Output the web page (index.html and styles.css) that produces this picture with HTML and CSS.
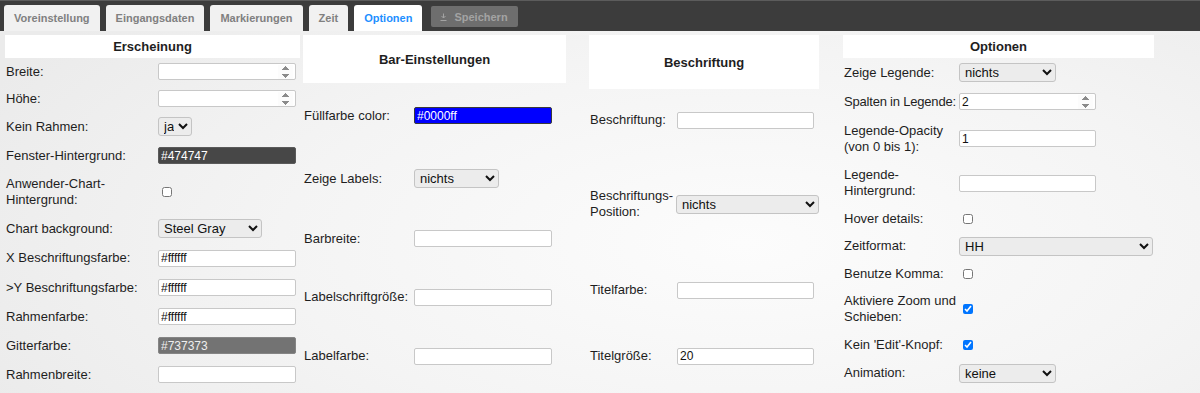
FILE: index.html
```html
<!DOCTYPE html>
<html lang="de">
<head>
  <meta charset="UTF-8" />
  <meta name="viewport" content="width=device-width, initial-scale=1.0" />
  <title>Chart Optionen</title>
  <link rel="stylesheet" href="styles.css">
</head>
<body>
  <div class="topbar">
    <div class="tab">Voreinstellung</div>
    <div class="tab">Eingangsdaten</div>
    <div class="tab">Markierungen</div>
    <div class="tab">Zeit</div>
    <div class="tab active">Optionen</div>
    <button class="save" disabled>
      <svg width="7" height="8" viewBox="0 0 7 8"><path d="M3.5 0.5v4.5M1.5 3l2 2 2-2M0.5 7.5h6" fill="none" stroke="#a3a3a3" stroke-width="1"/></svg>
      Speichern
    </button>
  </div>

  <div class="content">
    <!-- Erscheinung -->
    <div class="col col-look">
      <div class="col-head">Erscheinung</div>
      <div class="row"><label>Breite:</label><input type="number" class="field"></div>
      <div class="row"><label>Höhe:</label><input type="number" class="field"></div>
      <div class="row"><label>Kein Rahmen:</label><select class="pick w-ja"><option>ja</option><option>nein</option></select></div>
      <div class="row"><label>Fenster-Hintergrund:</label><input type="text" class="field dark" value="#474747"></div>
      <div class="row"><label>Anwender-Chart-Hintergrund:</label><input type="checkbox" class="check"></div>
      <div class="row"><label>Chart background:</label><select class="pick w-gray"><option>Steel Gray</option></select></div>
      <div class="row"><label>X Beschriftungsfarbe:</label><input type="text" class="field" value="#ffffff"></div>
      <div class="row"><label>&gt;Y Beschriftungsfarbe:</label><input type="text" class="field" value="#ffffff"></div>
      <div class="row"><label>Rahmenfarbe:</label><input type="text" class="field" value="#ffffff"></div>
      <div class="row"><label>Gitterfarbe:</label><input type="text" class="field grid" value="#737373"></div>
      <div class="row"><label>Rahmenbreite:</label><input type="text" class="field"></div>
    </div>

    <!-- Bar-Einstellungen -->
    <div class="col col-bar">
      <div class="col-head">Bar-Einstellungen</div>
      <div class="row"><label>Füllfarbe color:</label><input type="text" class="field blue" value="#0000ff"></div>
      <div class="row"><label>Zeige Labels:</label><select class="pick w-nichts"><option>nichts</option></select></div>
      <div class="row"><label>Barbreite:</label><input type="text" class="field"></div>
      <div class="row"><label>Labelschriftgröße:</label><input type="text" class="field"></div>
      <div class="row"><label>Labelfarbe:</label><input type="text" class="field"></div>
    </div>

    <!-- Beschriftung -->
    <div class="col col-text">
      <div class="col-head">Beschriftung</div>
      <div class="row"><label>Beschriftung:</label><input type="text" class="field"></div>
      <div class="row"><label>Beschriftungs-Position:</label><select class="pick w-pos"><option>nichts</option></select></div>
      <div class="row"><label>Titelfarbe:</label><input type="text" class="field"></div>
      <div class="row"><label>Titelgröße:</label><input type="text" class="field" value="20"></div>
    </div>

    <!-- Optionen -->
    <div class="col col-opt">
      <div class="col-head">Optionen</div>
      <div class="row"><label>Zeige Legende:</label><select class="pick w-mid"><option>nichts</option></select></div>
      <div class="row"><label class="one-line">Spalten in Legende:</label><input type="number" class="field" value="2"></div>
      <div class="row"><label>Legende-Opacity (von 0 bis 1):</label><input type="text" class="field" value="1"></div>
      <div class="row"><label>Legende-Hintergrund:</label><input type="text" class="field"></div>
      <div class="row"><label>Hover details:</label><input type="checkbox" class="check"></div>
      <div class="row"><label>Zeitformat:</label><select class="pick w-wide"><option>HH</option></select></div>
      <div class="row"><label>Benutze Komma:</label><input type="checkbox" class="check"></div>
      <div class="row"><label>Aktiviere Zoom und Schieben:</label><input type="checkbox" class="check" checked></div>
      <div class="row"><label>Kein 'Edit'-Knopf:</label><input type="checkbox" class="check" checked></div>
      <div class="row"><label>Animation:</label><select class="pick w-mid"><option>keine</option></select></div>
    </div>
  </div>
</body>
</html>
```

FILE: styles.css
```css
* { margin: 0; padding: 0; box-sizing: border-box; }
body {
  height: 393px;
  overflow: hidden;
  font-family: "Liberation Sans", Arial, sans-serif;
  font-size: 13px;
  color: #1e1e1e;
  background: radial-gradient(ellipse 70% 90% at 62% 62%, #fcfcfc 0%, #f4f4f4 55%, #ebebeb 100%);
}

/* Tab-Leiste */
.topbar {
  height: 31px;
  background: #3c3c3c;
  border-top: 1px solid #5c5c5c;
  padding: 4px 0 0 4px;
  display: flex;
  align-items: flex-start;
}
.tab {
  height: 26px;
  line-height: 26px;
  padding: 0 10px;
  margin-right: 6px;
  background: #f1f1f1;
  color: #808080;
  font-size: 11px;
  font-weight: bold;
  border-radius: 3px 3px 0 0;
}
.tab.active { background: #fff; color: #1e8fff; }
.save {
  height: 21px;
  margin: 1px 0 0 3px;
  padding: 0 10px 0 9px;
  display: flex;
  align-items: center;
  gap: 7px;
  border: none;
  border-radius: 2px;
  background: #6e6e6e;
  color: #a3a3a3;
  font-family: "Liberation Sans", Arial, sans-serif;
  font-size: 11px;
  font-weight: bold;
}

/* Spalten */
.content {
  display: flex;
  align-items: flex-start;
  padding: 4px 0 0 5px;
}
.col { display: grid; }
.col-look {
  width: 295px;
  grid-template-rows: 23px 27px 27px 29px 29px 44px 29px 30px 29px 29px 29px 29px;
}
.col-bar {
  width: 263px;
  margin-left: 3px;
  grid-template-rows: 48px 65px 61px 59px 58px 60px;
}
.col-text {
  width: 230px;
  margin-left: 23px;
  grid-template-rows: 54px 62px 106px 66px 66px;
}
.col-opt {
  width: 311px;
  margin-left: 24px;
  grid-template-rows: 23px 29px 29px 45px 44px 27px 28px 28px 42px 29px 28px;
}
.col-head {
  background: #fff;
  font-weight: bold;
  display: flex;
  align-items: center;
  justify-content: center;
}
.row {
  display: flex;
  align-items: center;
}
.row label {
  flex: 0 0 auto;
  padding-left: 1px;
  line-height: 16px;
}
.row label.one-line { white-space: nowrap; letter-spacing: -0.2px; }
.col-look label { width: 153px; }
.col-bar label { width: 111px; }
.col-text label { width: 87px; }
.col-opt label { width: 116px; }

/* Eingabefelder */
.field {
  width: 138px;
  height: 17px;
  padding: 0 2px;
  border: 1px solid #c8c8c8;
  border-radius: 2px;
  background: #fff;
  color: #111;
  font-family: "Liberation Sans", Arial, sans-serif;
  font-size: 12px;
}
.field::-webkit-inner-spin-button { opacity: 1; }
.col-text .field { width: 137px; margin-left: 1px; }
.col-opt .field { width: 137px; }
.field.dark { background: #474747; color: #fff; border-color: #5a5a5a; }
.field.grid { background: #737373; color: #eee; border-color: #858585; }
.field.blue { background: #0000ff; color: #fff; border-color: #3a3a3a; }

.pick {
  height: 19px;
  padding: 0 1px;
  border: 1px solid #c4c4c4;
  border-radius: 3px;
  background-color: #ececec;
  color: #111;
  font-family: "Liberation Sans", Arial, sans-serif;
  font-size: 13px;
}
.w-ja { width: 34px; }
.w-gray { width: 104px; }
.w-nichts { width: 85px; }
.w-pos { width: 143px; }
.w-mid { width: 97px; }
.w-wide { width: 194px; }

.check {
  width: 10px;
  height: 10px;
  margin: 0 0 0 4px;
}
```
